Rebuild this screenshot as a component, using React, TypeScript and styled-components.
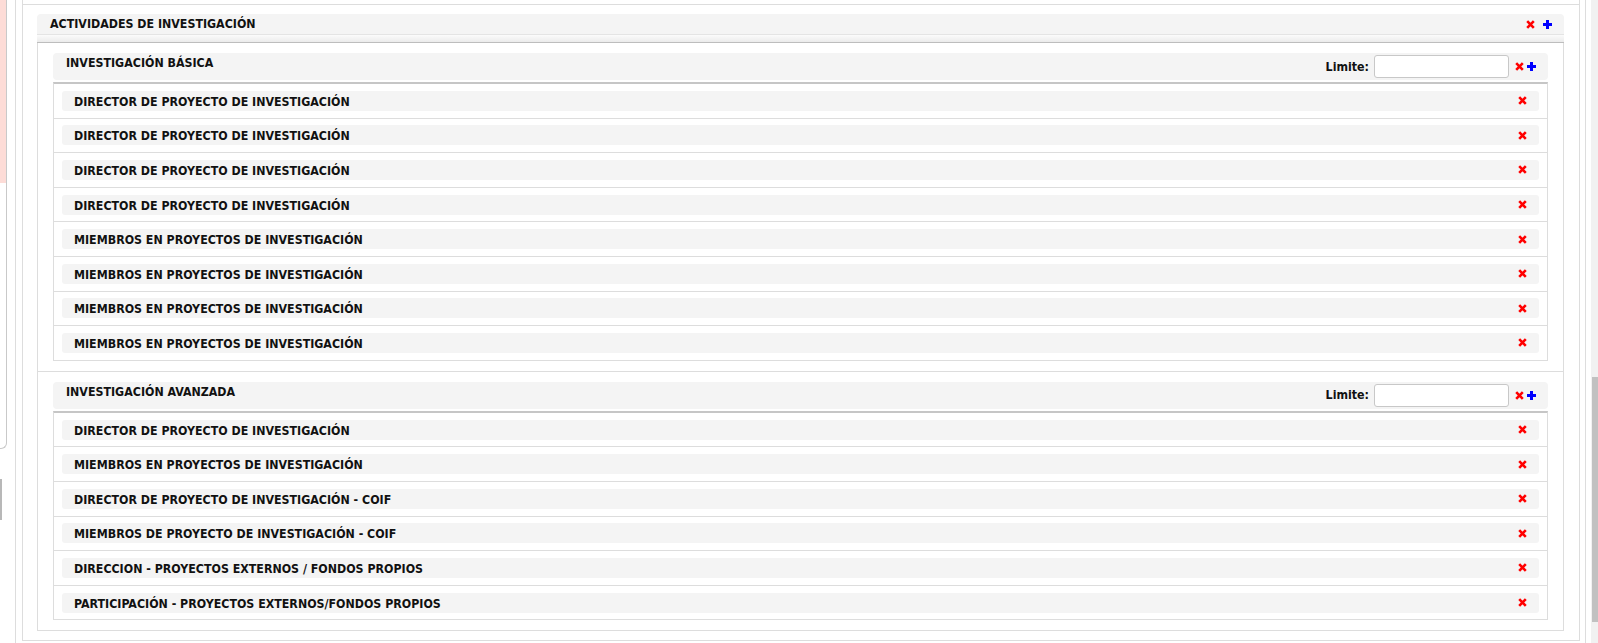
import styled, { createGlobalStyle } from 'styled-components'

const GlobalStyle = createGlobalStyle`
  html, body {
    margin: 0;
    padding: 0;
    background: #fff;
    overflow: hidden;
  }
  body {
    font-family: "DejaVu Sans Condensed", "DejaVu Sans", "Open Sans", sans-serif;
    font-stretch: condensed;
    font-size: 12.3px;
    color: #111;
  }
`

const Page = styled.div`
  display: flex;
  height: 643px;
  overflow: hidden;
`

const LeftStub = styled.div`
  width: 7px;
  margin-right: 8px;
  display: flex;
  flex-direction: column;
`

const StubCard = styled.div`
  height: 449px;
  box-sizing: border-box;
  border-right: 1px solid #c9c9c9;
  border-bottom: 1px solid #c9c9c9;
  border-bottom-right-radius: 6px;
  overflow: hidden;
`

const StubPink = styled.div`
  height: 183px;
  background: #fddcd7;
`

const StubBar = styled.div`
  margin-top: 30px;
  width: 2px;
  height: 41px;
  background: #b8b8b8;
`

const Main = styled.div`
  flex: 1;
  min-width: 0;
  box-sizing: border-box;
  border-left: 1px solid #ddd;
  border-right: 1px solid #ddd;
  padding: 0 5px 0 6px;
`

const OuterBox = styled.div`
  border: 1px solid #ddd;
  border-top: none;
  padding: 0 15px 9px 14px;
`

const PrevEdge = styled.div`
  height: 4px;
  border-bottom: 1px solid #ddd;
  margin: 0 -15px 9px -14px;
`

const Header = styled.div`
  display: flex;
  align-items: center;
  justify-content: space-between;
  background: #f4f4f4;
  border-radius: 4px 4px 0 0;
  padding: 1px 12px 1px 13px;
  line-height: 18px;
  font-weight: 700;
`

const Strip = styled.div`
  height: 7px;
  border-top: 1px solid #e4e4e4;
  border-bottom: 1px solid #bdbdbd;
  background: linear-gradient(#fbfbfb, #ebebeb);
`

const Body = styled.div`
  border: 1px solid #ddd;
  border-top: none;
`

const SubBlock = styled.div`
  padding: 10px 15px;
  border-bottom: 1px solid #ddd;
  &:last-child {
    border-bottom: none;
  }
`

const SubHeader = styled.div`
  display: flex;
  justify-content: space-between;
  align-items: center;
  height: 27px;
  box-sizing: border-box;
  padding: 0 12px 0 13px;
  background: #f4f4f4;
  border-radius: 4px;
`

const SubTitle = styled.div`
  align-self: flex-start;
  line-height: 20px;
  font-weight: 700;
`

const Controls = styled.div`
  display: flex;
  align-items: center;
`

const LimitLabel = styled.label`
  font-weight: 700;
  margin-right: 5px;
`

const LimitInput = styled.input`
  width: 135px;
  height: 23px;
  box-sizing: border-box;
  border: 1px solid #c8c8c8;
  border-radius: 3px;
  margin: 0 6px 0 0;
  padding: 0 4px;
  background: #fff;
`

const List = styled.div`
  margin-top: 2px;
  border: 1px solid #ddd;
  border-top: 2px solid #c6c6c6;
  border-bottom: none;
`

const Row = styled.div`
  padding: 6.8px 8px;
  border-bottom: 1px solid #ddd;
`

const RowInner = styled.div`
  display: flex;
  justify-content: space-between;
  align-items: center;
  height: 20px;
  padding: 0 12px 0 12px;
  background: #f4f4f4;
  border-radius: 3px;
`

const RowText = styled.span`
  line-height: 18px;
  padding-top: 2px;
  font-weight: 700;
`

const IconWrap = styled.span<{ $gap?: number }>`
  display: inline-flex;
  margin-left: ${(p) => p.$gap ?? 0}px;
  cursor: pointer;
`

const Scrollbar = styled.div`
  width: 7px;
  margin-left: 5px;
  background: #f1f1f1;
  display: flex;
  flex-direction: column;
`

const Thumb = styled.div`
  margin: 377px 0 0 1px;
  height: 245px;
  background: #c1c1c1;
`

const XIcon = ({ gap }: { gap?: number }) => (
  <IconWrap $gap={gap}>
    <svg width="9" height="9" viewBox="0 0 9 9">
      <path d="M1.2 1.2L7.8 7.8M7.8 1.2L1.2 7.8" stroke="#f00" strokeWidth="2.6" />
    </svg>
  </IconWrap>
)

const PlusIcon = ({ gap }: { gap?: number }) => (
  <IconWrap $gap={gap}>
    <svg width="9" height="9" viewBox="0 0 9 9">
      <path d="M3 0h3v3h3v3H6v3H3V6H0V3h3z" fill="#00f" />
    </svg>
  </IconWrap>
)

const DIR = 'DIRECTOR DE PROYECTO DE INVESTIGACIÓN'
const MIE = 'MIEMBROS EN PROYECTOS DE INVESTIGACIÓN'

const sections = [
  {
    title: 'INVESTIGACIÓN BÁSICA',
    items: [DIR, DIR, DIR, DIR, MIE, MIE, MIE, MIE]
  },
  {
    title: 'INVESTIGACIÓN AVANZADA',
    items: [
      DIR,
      MIE,
      'DIRECTOR DE PROYECTO DE INVESTIGACIÓN - COIF',
      'MIEMBROS DE PROYECTO DE INVESTIGACIÓN - COIF',
      'DIRECCION - PROYECTOS EXTERNOS / FONDOS PROPIOS',
      'PARTICIPACIÓN - PROYECTOS EXTERNOS/FONDOS PROPIOS'
    ]
  }
]

const App = () => {
  return (
    <>
      <GlobalStyle />
      <Page>
        <LeftStub>
          <StubCard>
            <StubPink />
          </StubCard>
          <StubBar />
        </LeftStub>
        <Main>
          <OuterBox>
            <PrevEdge />
            <Header>
              <span>ACTIVIDADES DE INVESTIGACIÓN</span>
              <Controls>
                <XIcon />
                <PlusIcon gap={8} />
              </Controls>
            </Header>
            <Strip />
            <Body>
              {sections.map((s) => (
                <SubBlock key={s.title}>
                  <SubHeader>
                    <SubTitle>{s.title}</SubTitle>
                    <Controls>
                      <LimitLabel>Limite:</LimitLabel>
                      <LimitInput type="text" />
                      <XIcon />
                      <PlusIcon gap={3} />
                    </Controls>
                  </SubHeader>
                  <List>
                    {s.items.map((item, i) => (
                      <Row key={i}>
                        <RowInner>
                          <RowText>{item}</RowText>
                          <XIcon />
                        </RowInner>
                      </Row>
                    ))}
                  </List>
                </SubBlock>
              ))}
            </Body>
          </OuterBox>
        </Main>
        <Scrollbar>
          <Thumb />
        </Scrollbar>
      </Page>
    </>
  )
}

export default App
